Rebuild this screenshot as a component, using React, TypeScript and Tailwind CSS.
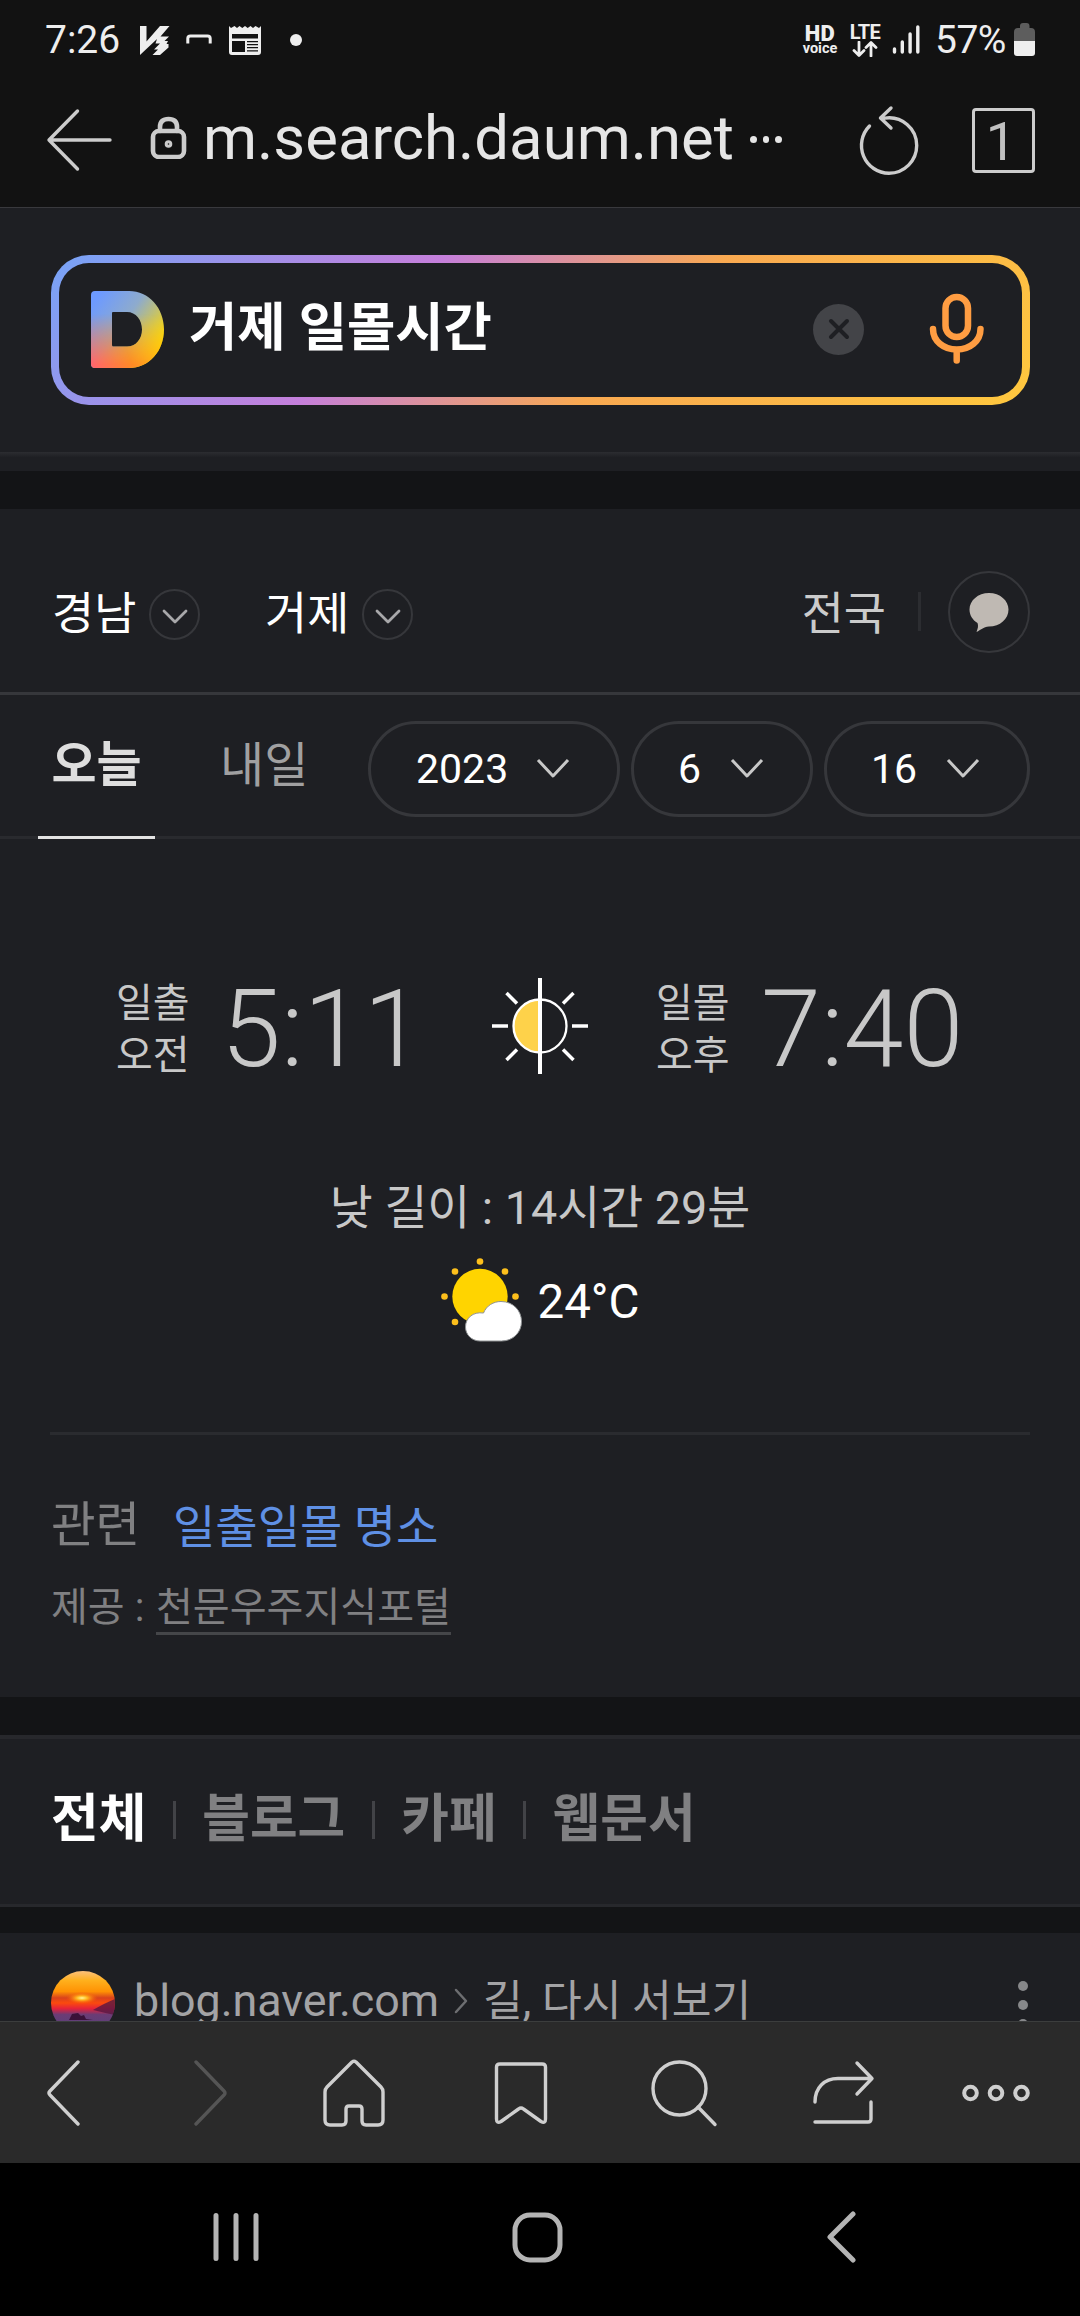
import type { ReactNode } from "react";

const searchTabs = ["전체", "블로그", "카페", "웹문서"];

const dateSelects = [
    { value: "2023", box: "w-[252px] pl-[45px]", chevron: "right-[47px]" },
    { value: "6", box: "w-[182px] pl-[44px]", chevron: "right-[46px]" },
    { value: "16", box: "w-[206px] pl-[44px]", chevron: "right-[47px]" },
];

type IconProps = {
    w: number;
    h: number;
    className?: string;
    stroke?: number;
    children: ReactNode;
};

function Icon({ w, h, className = "", stroke = 3.4, children }: IconProps) {
    return (
        <svg
            width={w}
            height={h}
            viewBox={`0 0 ${w} ${h}`}
            fill="none"
            stroke="currentColor"
            strokeWidth={stroke}
            strokeLinecap="round"
            strokeLinejoin="round"
            className={`shrink-0 ${className}`}
        >
            {children}
        </svg>
    );
}

function StatusBar() {
    return (
        <div className="flex h-[80px] items-center pl-[45px] text-[#eeeeee]">
            <span className="w-[95px] text-[39px] leading-[80px]">7:26</span>
            <Icon w={30} h={30} stroke={0}>
                <path
                    fill="currentColor"
                    d="M0 1H6.5V16.5L20 1H29.5L20.5 11.5H29L24.5 16H28L26.5 19H28.5V22.5L20 30H12.5L18 24.5H14L20 18.5H15.5L17 14L0 30Z"
                />
            </Icon>
            <Icon w={26} h={12} stroke={3} className="ml-[16px]">
                <path d="M1.8 9.5V4.5Q1.8 2 4.5 2H21.5Q24.2 2 24.2 4.5V9.5" strokeLinecap="butt" />
            </Icon>
            <Icon w={32} h={30} stroke={0} className="ml-[17px]">
                <path
                    fill="currentColor"
                    d="M0 1L2 3L5.5 1L8 3L10.5 1L13.3 3L16 1L18.7 3L21.5 1L24 3L26.5 1L30 3L32 1V27Q32 30 29 30H3Q0 30 0 27Z"
                />
                <path fill="#121212" d="M3 9H29V13.5H3ZM3 16H16V27H3ZM18 16H29V17.3H18ZM18 19H29V20.3H18ZM18 22H29V23.3H18ZM18 25.3H29V26.6H18Z" />
            </Icon>
            <span className="ml-[29px] size-[12px] rounded-full bg-[#eeeeee]" />

            <div className="ml-[501px] flex w-[34px] flex-col items-center">
                <span className="h-[17px] text-[22px] leading-[16px] font-black tracking-[0.5px]">HD</span>
                <span className="text-[14.5px] leading-[12px] font-bold">voice</span>
            </div>
            <div className="ml-[11px] flex w-[34px] flex-col items-center">
                <span className="h-[17px] text-[20px] leading-[16px] font-bold tracking-[-0.5px]">LTE</span>
                <Icon w={26} h={16} stroke={2.8}>
                    <path d="M7 1V14M2 9.5L7 14.5L12 9.5M19 15V2M14 6.5L19 1.5L24 6.5" />
                </Icon>
            </div>
            <Icon w={28} h={30} stroke={3.4} className="ml-[10px]">
                <path d="M2.5 24V27M10.3 17V27M18.1 9V27M25.8 2V27" />
            </Icon>
            <span className="ml-[15px] w-[79px] text-[39px] leading-[80px] tracking-[-0.5px]">57%</span>
            <Icon w={21} h={34} stroke={0}>
                <path fill="#5d5d5d" d="M6 3Q6 0 9 0H12.500Q15.500 0 15.500 3V5H17Q21 5 21 9V18H0V9Q0 5 4 5H6Z" />
                <path fill="currentColor" d="M0 18H21V30Q21 33 18 33H3Q0 33 0 30Z" />
            </Icon>
        </div>
    );
}

function AddressBar() {
    return (
        <div className="flex h-[127px] items-center pb-[7px] pl-[46px] text-[#cccccc]">
            <Icon w={68} h={64}>
                <path d="M31.500 3L3 32L31.500 61M3 32H64" />
            </Icon>
            <Icon w={37} h={43} stroke={4.6} className="ml-[36px] -mt-[6px]">
                <rect x="3" y="15" width="31" height="26" rx="6" />
                <path d="M10 15V11Q10 3 18.500 3Q27 3 27 11V15" />
                <circle cx="18.500" cy="28" r="1.500" />
            </Icon>
            <span className="mt-[-5px] ml-[16px] w-[547px] text-[61.700px] leading-[80px] text-[#e6e6e6]">m.search.daum.net</span>
            <div className="mb-px flex gap-[6px]">
                <span className="size-[6.500px] rounded-full bg-[#e6e6e6]" />
                <span className="size-[6.500px] rounded-full bg-[#e6e6e6]" />
                <span className="size-[6.500px] rounded-full bg-[#e6e6e6]" />
            </div>
            <Icon w={62} h={72} className="ml-[75px] mt-[2px]">
                <path d="M12.500 21A27.700 27.700 0 0 0 32 68.200A27.700 27.700 0 0 0 59.700 40.500A27.700 27.700 0 0 0 28 13.100L23.500 13M34 3L23.500 13L34 23" />
            </Icon>
            <div className="ml-[53px] flex h-[65px] w-[63px] items-center justify-center rounded-[4px] border-3 border-[#cccccc] text-[54px] leading-[60px] text-[#c0c0c0]">
                <span className="mt-[3px] -ml-[4px]">1</span>
            </div>
        </div>
    );
}

function DaumLogo() {
    const shape =
        "M4 0H38C58 0 73 17 73 38.5S58 77 38 77H4Q0 77 0 73V4Q0 0 4 0ZM22 21Q21 21 21 22V54Q21 55.5 22 55.5H36C45 55.5 51 48 51 38.5S45 21 36 21Z";

    return (
        <svg width="73" height="77" viewBox="0 0 73 77" className="shrink-0">
            <defs>
                <linearGradient id="logoTop" x1="0.15" y1="0" x2="1" y2="0.65">
                    <stop offset="0" stopColor="#6d9aff" />
                    <stop offset="0.45" stopColor="#8eabcd" />
                    <stop offset="1" stopColor="#ffdb00" />
                </linearGradient>
                <linearGradient id="logoBottom" x1="0" y1="1" x2="1" y2="0.6">
                    <stop offset="0" stopColor="#ff6470" />
                    <stop offset="0.5" stopColor="#ff8a25" />
                    <stop offset="1" stopColor="#ffc810" />
                </linearGradient>
                <linearGradient id="logoFade" x1="0" y1="0" x2="0" y2="1">
                    <stop offset="0.3" stopColor="#000" />
                    <stop offset="0.95" stopColor="#fff" />
                </linearGradient>
                <mask id="logoMask">
                    <rect width="73" height="77" fill="url(#logoFade)" />
                </mask>
            </defs>
            <path fill="url(#logoTop)" fillRule="evenodd" d={shape} />
            <path mask="url(#logoMask)" fill="url(#logoBottom)" fillRule="evenodd" d={shape} />
        </svg>
    );
}

function SearchBox() {
    return (
        <header className="h-[263px] border-t border-[#39393d] px-[50px] pt-[47px]">
            <div className="ml-px h-[150px] w-[979px] rounded-[38px] bg-[linear-gradient(135deg,#76a4f7_0%,#c57fdb_35%,#f9a951_60%,#ffc83e_100%)] p-[8px]">
                <div className="flex h-full items-center rounded-[30px] bg-[#1e1f23] pb-[2px] pl-[32px]">
                    <DaumLogo />
                    <span className="mt-[-2px] ml-[25px] w-[624px] text-[52.500px] leading-[60px] font-bold text-white">거제 일몰시간</span>
                    <span className="flex size-[51px] items-center justify-center rounded-full bg-[#434448] text-[#1e1f23]">
                        <Icon w={22} h={22} stroke={4}>
                            <path d="M3 3L19 19M19 3L3 19" />
                        </Icon>
                    </span>
                    <Icon w={56} h={74} stroke={6.500} className="ml-[65px] text-[#ff9d42]">
                        <rect x="16.500" y="5" width="22.500" height="40" rx="11.250" />
                        <path d="M4 37C4 49 14.500 57.500 27.700 57.500S51.500 49 51.500 37M27.700 58V68.500" />
                    </Icon>
                </div>
            </div>
            <div className="-mx-[50px] mt-[47px] h-[5px] bg-linear-to-b from-[#2c2d31] to-[#1f2024]" />
        </header>
    );
}

function RegionButton({ label }: { label: string }) {
    return (
        <button className="flex items-center">
            <span className="w-[97px] pt-px text-left text-[45.800px] leading-[56px] text-white">{label}</span>
            <span className="flex size-[51px] items-center justify-center rounded-full border-[2.500px] border-[#36373b] text-[#a8a8aa]">
                <Icon w={26} h={16} stroke={2.800} className="mt-[5px]">
                    <path d="M2 2L13 13L24 2" />
                </Icon>
            </span>
        </button>
    );
}

function RegionBar() {
    return (
        <div className="flex h-[186px] items-center border-b-3 border-[#36373b] pt-[22px] pr-[50px] pl-[52px]">
            <div className="mt-[5px] flex gap-[65px]">
                <RegionButton label="경남" />
                <RegionButton label="거제" />
            </div>
            <span className="mt-[7px] ml-auto text-[45.800px] leading-[56px] text-[#cbcbcb]">전국</span>
            <span className="ml-[32px] h-[39px] w-[3px] bg-[#2c2d31]" />
            <button className="ml-[27px] flex size-[82px] items-center justify-center rounded-full border-[2.500px] border-[#36373b]">
                <svg width="40" height="40" viewBox="0 0 40 40" fill="#bfb9b3">
                    <path d="M20 1C31 1 39.500 8.500 39.500 17.500C39.500 27 31 34.500 20 34.500C14 35 12 38 7.500 40C9 36 9.500 34 8.500 31C3.500 28 .5 23 .5 17.500C.5 8.500 9 1 20 1Z" />
                </svg>
            </button>
        </div>
    );
}

function DateBar() {
    return (
        <div className="flex h-[144px] border-b-3 border-[#292a2e] pl-[38px]">
            <button className="-mb-[3px] w-[117px] border-b-3 border-[#e3e3e3] pt-px text-[49px] leading-[140px] font-bold text-[#dedede]">
                오늘
            </button>
            <button className="w-[213px] pl-[65px] text-left text-[48px] leading-[141px] text-[#a0a0a1]">내일</button>
            <div className="mt-[26px] flex gap-[11px]">
                {dateSelects.map((item) => (
                    <button
                        key={item.value}
                        className={`relative flex h-[96px] items-center rounded-full border-3 border-[#36373b] text-[41px] leading-[60px] text-white ${item.box}`}
                    >
                        {item.value}
                        <Icon w={34} h={22} stroke={3} className={`absolute top-[34px] text-[#c8c8c8] ${item.chevron}`}>
                            <path d="M2 2L17 18L32 2" strokeLinecap="butt" />
                        </Icon>
                    </button>
                ))}
            </div>
        </div>
    );
}

function SunTime({ label, half, time, className }: { label: string; half: string; time: string; className: string }) {
    return (
        <div className={`flex items-center ${className}`}>
            <div className="mt-[2px] w-[105px] text-[40px] leading-[52px]">
                <div>{label}</div>
                <div>{half}</div>
            </div>
            <span className="text-[108px] leading-[104px] font-light">{time}</span>
        </div>
    );
}

function SunInfo() {
    return (
        <div className="mx-[50px] h-[596px] border-b-3 border-[#2a2b2f] pt-[138px] text-[#c8c8c8]">
            <div className="flex h-[104px]">
                <SunTime label="일출" half="오전" time="5:11" className="ml-[66px] w-[375px]" />
                <svg width="98" height="98" viewBox="0 0 98 98" fill="none" stroke="#fff" strokeWidth="3.500">
                    <path d="M49 22.500A26.500 26.500 0 0 0 49 75.500Z" fill="#fed24a" stroke="none" />
                    <circle cx="49" cy="49" r="26.500" strokeWidth="2.300" />
                    <path d="M49 1V97" strokeWidth="4" />
                    <path d="M1 49H17M81 49H97M15.500 16L26 26.500M82.500 16L72 26.500M15.500 83L26 72.500M82.500 83L72 72.500" />
                </svg>
                <SunTime label="일몰" half="오후" time="7:40" className="ml-[67px]" />
            </div>
            <p className="mt-[97px] text-center text-[46.700px] leading-[60px]">낮 길이 : 14시간 29분</p>
            <div className="mt-[20px] flex items-center justify-center">
                <svg width="84" height="84" viewBox="0 0 84 84">
                    <circle cx="40" cy="38.500" r="27.700" fill="#ffd400" />
                    <g fill="#fdbf1c">
                        <circle cx="40" cy="3.500" r="3.300" />
                        <circle cx="65" cy="13.500" r="3.300" />
                        <circle cx="75.500" cy="38.500" r="3.300" />
                        <circle cx="15" cy="13.500" r="3.300" />
                        <circle cx="4.500" cy="38.500" r="3.300" />
                        <circle cx="15" cy="64" r="3.300" />
                    </g>
                    <path
                        d="M40 83C31.500 83 25.500 76.500 25.500 69C25.500 60 33 53.500 43.500 55C46.500 47.500 53.500 43.500 61 43.500C73 43.500 81.500 52.500 81.500 63.500C81.500 74.500 73 83 61.500 83Z"
                        fill="#fff"
                        stroke="#8f9294"
                        strokeWidth="1"
                    />
                </svg>
                <span className="mt-[3px] ml-[13px] text-[47.500px] leading-[60px] text-white">24°C</span>
            </div>
        </div>
    );
}

function Related() {
    return (
        <div className="h-[262px] pt-[61px] pl-[51px] text-[#808082]">
            <div className="flex leading-[60px]">
                <span className="w-[122px] text-[48.500px]">관련</span>
                <a className="pt-px text-[46px] text-[#5f90e5]">일출일몰 명소</a>
            </div>
            <div className="mt-[26px] flex text-[40.100px] leading-[49px]">
                <span className="w-[105px] whitespace-pre">제공 :</span>
                <a className="border-b-3 border-[#454649]">천문우주지식포털</a>
            </div>
        </div>
    );
}

function ResultTabs() {
    return (
        <nav className="flex h-[172px] items-center border-t-4 border-b-3 border-[#27282c] pb-[4px] pl-[51px] text-[51.800px] leading-[60px] font-bold text-[#808082]">
            {searchTabs.map((tab, i) => (
                <div key={tab} className="flex items-center">
                    {i > 0 && <span className="mx-[26.500px] h-[38px] w-[3px] bg-[#424347]" />}
                    <span className={i === 0 ? "text-white" : ""}>{tab}</span>
                </div>
            ))}
        </nav>
    );
}

function BlogResult() {
    return (
        <div className="h-[88px] overflow-hidden pt-[38px] pl-[51px]">
            <div className="flex h-[64px] items-center text-[#a3a3a5]">
                <svg width="64" height="64" viewBox="0 0 64 64" className="shrink-0">
                    <defs>
                        <linearGradient id="sky" x1="0" y1="0" x2="0" y2="1">
                            <stop offset="0" stopColor="#fdc07c" />
                            <stop offset="0.15" stopColor="#ffb01c" />
                            <stop offset="0.32" stopColor="#ff9204" />
                            <stop offset="0.42" stopColor="#d9421c" />
                            <stop offset="0.5" stopColor="#fb4a0e" />
                            <stop offset="0.59" stopColor="#e4213c" />
                            <stop offset="0.68" stopColor="#6c3c74" />
                            <stop offset="1" stopColor="#4b4580" />
                        </linearGradient>
                        <radialGradient id="glow">
                            <stop offset="0" stopColor="#fff79a" />
                            <stop offset="0.35" stopColor="#ffb51e" />
                            <stop offset="1" stopColor="#ff5a00" stopOpacity="0" />
                        </radialGradient>
                        <clipPath id="avatar">
                            <circle cx="32" cy="32" r="32" />
                        </clipPath>
                    </defs>
                    <g clipPath="url(#avatar)">
                        <rect width="64" height="64" fill="url(#sky)" />
                        <path d="M64 28Q54 32 42 39Q54 42 64 44Z" fill="#571642" opacity="0.8" />
                        <ellipse cx="31" cy="27" rx="16" ry="6" fill="url(#glow)" />
                        <path d="M18 49L21 43L27 42L30 45L33 44L35 48L42 49Z" fill="#3a1238" />
                    </g>
                </svg>
                <span className="mt-[-4px] ml-[19px] w-[320px] text-[44.800px] leading-[60px]">blog.naver.com</span>
                <Icon w={14} h={26} stroke={2.500} className="-mt-[4px] text-[#6d6e71]">
                    <path d="M2 2L12 13L2 24" />
                </Icon>
                <span className="mt-[-3px] ml-[15px] text-[43.200px] leading-[60px]">길, 다시 서보기</span>
                <div className="mt-[3px] ml-auto mr-[52px] flex flex-col gap-[9px]">
                    <span className="size-[10px] rounded-full bg-[#87888a]" />
                    <span className="size-[10px] rounded-full bg-[#87888a]" />
                    <span className="size-[10px] rounded-full bg-[#87888a]" />
                </div>
            </div>
        </div>
    );
}

function Toolbar() {
    return (
        <div className="flex h-[142px] items-center border-t border-[#3b3d3d] bg-[#2a2a2a] pt-px pl-[46px] text-[#cfcfcf]">
            <Icon w={34} h={66}>
                <path d="M32 2L4 31Q2 33 4 35L32 64" />
            </Icon>
            <Icon w={34} h={66} className="ml-[114px] text-[#555555]">
                <path d="M2 2L30 31Q32 33 30 35L2 64" />
            </Icon>
            <Icon w={64} h={68} className="ml-[94px]">
                <path d="M30 3Q32 1.500 34 3L59 28Q61 30 61 33V61Q61 66 56 66H44Q40 66 40 62V50Q40 47 37 47H27Q24 47 24 50V62Q24 66 20 66H8Q3 66 3 61V33Q3 30 5 28Z" />
            </Icon>
            <Icon w={54} h={64} className="ml-[108px]">
                <path d="M6 3H48Q51.500 3 51.500 6V58Q51.500 63 47 60.500L29.500 48Q27 46 24.500 48L7 60.500Q2.500 63 2.500 58V6Q2.500 3 6 3Z" />
            </Icon>
            <Icon w={68} h={68} className="ml-[103px]">
                <circle cx="28.500" cy="29.500" r="26.500" />
                <path d="M47 48L64 65.500" />
            </Icon>
            <Icon w={64} h={66} className="ml-[93px]">
                <path d="M3 42C3 28 12 18.500 26 18.500H59M45 3L60 18.500L45 34M3 62H56Q59 62 59 59V42" />
            </Icon>
            <Icon w={72} h={20} stroke={4} className="ml-[85px]">
                <circle cx="9.500" cy="10" r="6.300" />
                <circle cx="35" cy="10" r="6.300" />
                <circle cx="60.500" cy="10" r="6.300" />
            </Icon>
        </div>
    );
}

function SystemNav() {
    return (
        <div className="flex h-[153px] items-center bg-black pb-[5px] pl-[212px] text-[#b4b4b4]">
            <Icon w={48} h={52} stroke={5}>
                <path d="M4 4.500V47.500M24 4.500V47.500M44 4.500V47.500" />
            </Icon>
            <Icon w={52} h={52} stroke={5} className="ml-[251px]">
                <rect x="4" y="4" width="45" height="45" rx="15" />
            </Icon>
            <Icon w={30} h={52} stroke={5} className="ml-[264px]">
                <path d="M26 3L3 26L26 49" />
            </Icon>
        </div>
    );
}

export default function App() {
    return (
        <div className="h-[2316px] w-[1080px] overflow-hidden bg-[#1e1f23] font-['Roboto','Noto_Sans_CJK_KR',sans-serif]">
            <div className="bg-[#121212]">
                <StatusBar />
                <AddressBar />
            </div>
            <SearchBox />
            <div className="mt-px h-[38px] bg-[#131416]" />
            <RegionBar />
            <DateBar />
            <SunInfo />
            <Related />
            <div className="h-[38px] bg-[#131416]" />
            <ResultTabs />
            <div className="h-[26px] bg-[#131416]" />
            <BlogResult />
            <Toolbar />
            <SystemNav />
        </div>
    );
}
